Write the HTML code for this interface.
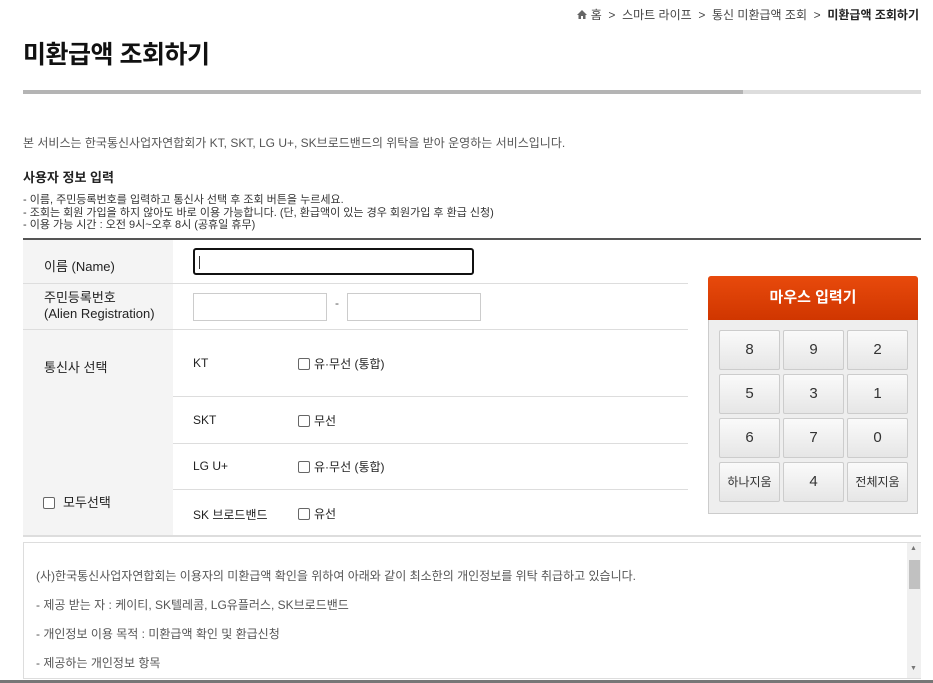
<!DOCTYPE html>
<html><head><meta charset="utf-8"><style>
*{margin:0;padding:0;box-sizing:border-box}
body{width:933px;height:683px;overflow:hidden;background:#fff;font-family:"Liberation Sans","Noto Sans CJK KR",sans-serif;color:#222;position:relative}
.a{position:absolute;white-space:nowrap}
.btn{position:absolute;width:61px;height:40px;border:1px solid #ccc;border-radius:2px;background:linear-gradient(#fafafa,#e6e6e6);font-size:15px;color:#333;text-align:center;line-height:38px}
.btn.s{font-size:12px}
.cb{display:inline-block;width:12px;height:12px;border:1px solid #666;border-radius:2px;vertical-align:-2px;margin-right:4px;background:#fff}
.l{position:absolute;height:1px;background:#ddd}
</style></head><body>
<div class="a" style="right:14px;top:6px;font-size:12px;color:#444">
<svg width="10" height="9" viewBox="0 0 10 9" style="vertical-align:0"><path d="M5 0L0 5h1.5v4h2.5V6h2v3h2.5V5H10z" fill="#666"/></svg> 홈 &nbsp;&gt;&nbsp; 스마트 라이프 &nbsp;&gt;&nbsp; 통신 미환급액 조회 &nbsp;&gt;&nbsp; <b style="color:#222">미환급액 조회하기</b></div>
<div class="a" style="left:23px;top:35px;font-size:25px;font-weight:bold;color:#111;letter-spacing:-0.5px">미환급액 조회하기</div>
<div class="a" style="left:23px;top:90px;width:720px;height:4px;background:#b4b4b4"></div>
<div class="a" style="left:743px;top:90px;width:178px;height:4px;background:#ddd"></div>
<div class="a" style="left:23px;top:134px;font-size:12px;color:#555">본 서비스는 한국통신사업자연합회가 KT, SKT, LG U+, SK브로드밴드의 위탁을 받아 운영하는 서비스입니다.</div>
<div class="a" style="left:23px;top:167px;font-size:13px;font-weight:bold;color:#222">사용자 정보 입력</div>
<div class="a" style="left:23px;top:194px;font-size:11px;line-height:12.5px;color:#333">- 이름, 주민등록번호를 입력하고 통신사 선택 후 조회 버튼을 누르세요.<br>- 조회는 회원 가입을 하지 않아도 바로 이용 가능합니다. (단, 환급액이 있는 경우 회원가입 후 환급 신청)<br>- 이용 가능 시간 : 오전 9시~오후 8시 (공휴일 휴무)</div>
<div class="a" style="left:23px;top:238px;width:898px;height:2px;background:#555"></div>
<div class="a" style="left:23px;top:240px;width:150px;height:296px;background:#f4f4f4"></div>
<div class="l" style="left:23px;top:283px;width:665px"></div>
<div class="l" style="left:23px;top:329px;width:665px"></div>
<div class="l" style="left:173px;top:396px;width:515px"></div>
<div class="l" style="left:173px;top:443px;width:515px"></div>
<div class="l" style="left:173px;top:489px;width:515px"></div>
<div class="l" style="left:23px;top:535px;width:898px;height:2px"></div>
<div class="a" style="left:44px;top:256px;font-size:13px;color:#222">이름 (Name)</div>
<div class="a" style="left:193px;top:248px;width:281px;height:27px;border:2px solid #111;border-radius:3px"></div>
<div class="a" style="left:199px;top:256px;width:1px;height:13px;background:#333"></div>
<div class="a" style="left:44px;top:290px;font-size:13px;line-height:16px;color:#222">주민등록번호<br>(Alien Registration)</div>
<div class="a" style="left:193px;top:293px;width:134px;height:28px;border:1px solid #ccc"></div>
<div class="a" style="left:335px;top:296px;font-size:12px;color:#555">-</div>
<div class="a" style="left:347px;top:293px;width:134px;height:28px;border:1px solid #ccc"></div>
<div class="a" style="left:44px;top:357px;font-size:13px;color:#222">통신사 선택</div>
<div class="a" style="left:24px;top:492px;font-size:13px;color:#222"><span class="cb" style="margin-left:19px;margin-right:8px"></span>모두선택</div>
<div class="a" style="left:193px;top:356px;font-size:12px">KT</div>
<div class="a" style="left:298px;top:355px;font-size:12px"><span class="cb"></span>유·무선 (통합)</div>
<div class="a" style="left:193px;top:413px;font-size:12px">SKT</div>
<div class="a" style="left:298px;top:412px;font-size:12px"><span class="cb"></span>무선</div>
<div class="a" style="left:193px;top:459px;font-size:12px">LG U+</div>
<div class="a" style="left:298px;top:458px;font-size:12px"><span class="cb"></span>유·무선 (통합)</div>
<div class="a" style="left:193px;top:506px;font-size:12px">SK 브로드밴드</div>
<div class="a" style="left:298px;top:505px;font-size:12px"><span class="cb"></span>유선</div>
<div class="a" style="left:708px;top:276px;width:210px;height:238px;background:#eee;border:1px solid #ccc;border-radius:3px 3px 0 0"></div>
<div class="a" style="left:708px;top:276px;width:210px;height:44px;background:linear-gradient(#e84a0c,#d03600);border-radius:3px 3px 0 0;color:#fff;font-size:15px;font-weight:bold;text-align:center;line-height:44px">마우스 입력기</div>
<div class="btn" style="left:719px;top:330px">8</div><div class="btn" style="left:783px;top:330px">9</div><div class="btn" style="left:847px;top:330px">2</div>
<div class="btn" style="left:719px;top:374px">5</div><div class="btn" style="left:783px;top:374px">3</div><div class="btn" style="left:847px;top:374px">1</div>
<div class="btn" style="left:719px;top:418px">6</div><div class="btn" style="left:783px;top:418px">7</div><div class="btn" style="left:847px;top:418px">0</div>
<div class="btn s" style="left:719px;top:462px">하나지움</div><div class="btn" style="left:783px;top:462px">4</div><div class="btn s" style="left:847px;top:462px">전체지움</div>
<div class="a" style="left:23px;top:542px;width:898px;height:137px;border:1px solid #ddd"></div>
<div class="a" style="left:907px;top:543px;width:14px;height:135px;background:#f0f0f0"></div>
<div class="a" style="left:909px;top:560px;width:11px;height:29px;background:#c1c1c1"></div>
<div class="a" style="left:910px;top:545px;font-size:7px;color:#777">▲</div>
<div class="a" style="left:910px;top:665px;font-size:7px;color:#777">▼</div>
<div class="a" style="left:36px;top:562px;font-size:12px;line-height:29px;color:#555">(사)한국통신사업자연합회는 이용자의 미환급액 확인을 위하여 아래와 같이 최소한의 개인정보를 위탁 취급하고 있습니다.<br>- 제공 받는 자 : 케이티, SK텔레콤, LG유플러스, SK브로드밴드<br>- 개인정보 이용 목적 : 미환급액 확인 및 환급신청<br>- 제공하는 개인정보 항목</div>
<div class="a" style="left:0;top:680px;width:933px;height:3px;background:#777"></div>
</body></html>
